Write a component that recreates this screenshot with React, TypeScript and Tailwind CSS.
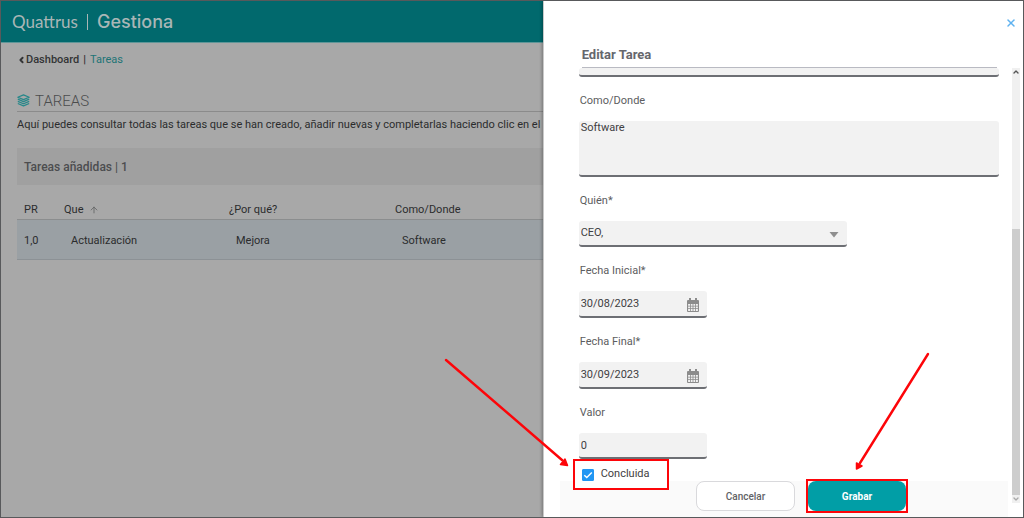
import React from "react";
import { ArrowUp, ChevronDown, ChevronLeft, ChevronUp, X } from "lucide-react";

const fieldClass =
  "block bg-[#f2f2f2] border-0 border-b-2 border-[#6d6f74] rounded-[3px] px-0.5 text-[11px] text-[#3f4042] outline-none";

const labelClass = "block pl-px pt-4 pb-3 text-[11px] leading-4 text-[#5c5d60]";

const LayersIcon = () => (
  <svg viewBox="0 0 24 24" className="w-[13px] h-[13px]" fill="none" stroke="#27888a" strokeWidth="2.3" strokeLinejoin="round">
    <path d="M12 1.5 L22.5 6 L12 10.5 L1.5 6 Z" />
    <path d="M1.500 9.500 L12 14 L22.500 9.500" />
    <path d="M1.500 13.500 L12 18 L22.500 13.500" />
    <path d="M1.500 17.500 L12 22 L22.500 17.500" />
  </svg>
);

const CalendarIcon = () => (
  <svg viewBox="0 0 12 14" className="w-3 h-3.5" fill="#8c8c8c">
    <path d="M2 0h2v2h4V0h2v2h1a1 1 0 0 1 1 1v2H0V3a1 1 0 0 1 1-1h1z" />
    <path
      fillRule="evenodd"
      d="M0 5h12v8a1 1 0 0 1-1 1H1a1 1 0 0 1-1-1zM1.100 6v1.800h1.900V6zM3.800 6v1.800h1.800V6zM6.400 6v1.800h1.800V6zM9 6v1.800h1.900V6zM1.100 8.500v1.800h1.900V8.500zM3.800 8.500v1.800h1.800V8.500zM6.400 8.500v1.800h1.800V8.500zM9 8.500v1.800h1.900V8.500zM1.100 11.100v1.800h1.900v-1.800zM3.800 11.100v1.800h1.800v-1.800zM6.400 11.100v1.800h1.800v-1.800zM9 11.100v1.800h1.900v-1.800z"
    />
  </svg>
);

type DateFieldProps = { id: string; label: string; value: string };

const DateField = ({ id, label, value }: DateFieldProps) => (
  <div>
    <label htmlFor={id} className={labelClass}>
      {label}
    </label>
    <div className="relative w-32">
      <input id={id} type="text" defaultValue={value} className={`${fieldClass} w-full h-[27px]`} />
      <button type="button" aria-label={`Abrir calendario ${label}`} className="absolute right-2 top-[7px]">
        <CalendarIcon />
      </button>
    </div>
  </div>
);

const TaskList = () => (
  <main className="flex-1 min-w-0 overflow-hidden bg-[#a8a8a8] whitespace-nowrap text-[11px] leading-4 text-[#2b2c2d]">
    <header className="flex items-center h-[42px] pl-[11px] bg-[#01696d] border-b border-[#5f9698] text-[#a9b6b6]">
      <span className="font-['Lato'] text-[17px]">Quattrus</span>
      <span className="w-px h-4 mx-[9px] bg-[#a9b6b6]" />
      <span className="font-['Inter'] text-[18px] font-medium">Gestiona</span>
    </header>
    <div className="pl-4 pt-[9px]">
      <nav className="flex items-center gap-1">
        <a href="#dashboard" className="flex items-center font-medium text-[#333435]">
          <ChevronLeft className="w-[9px] h-3" strokeWidth={5} />
          Dashboard
        </a>
        <span className="font-medium">|</span>
        <a href="#tareas" className="text-[#217476]">
          Tareas
        </a>
      </nav>
      <div className="flex items-end gap-[5px] mt-6 border-b border-[#8b8b8b]">
        <div className="pb-1">
          <LayersIcon />
        </div>
        <h1 className="text-[15px] leading-[19px] font-light text-[#4b4c4d]">TAREAS</h1>
      </div>
      <p className="mt-[5px]">
        Aquí puedes consultar todas las tareas que se han creado, añadir nuevas y completarlas haciendo clic en el
      </p>
      <h2 className="flex items-center h-[37px] mt-[15px] pl-[7px] bg-[#a0a0a0] text-[12px] font-medium text-[#4c4d4f]">
        Tareas añadidas | 1
      </h2>
      <table className="table-fixed w-full border-collapse text-left">
        <thead>
          <tr className="border-b border-[#8b8d8e]">
            <th className="w-10 pt-[17px] pb-px pl-[7px] font-normal">PR</th>
            <th className="w-[165px] pt-[17px] pb-px pl-[7px] font-normal">
              <span className="flex items-center gap-1.5">
                Que
                <ArrowUp className="w-[10px] h-[10px] text-[#626364]" />
              </span>
            </th>
            <th className="w-[166px] pt-[17px] pb-px pl-[7px] font-normal">¿Por qué?</th>
            <th className="pt-[17px] pb-px pl-[7px] font-normal">Como/Donde</th>
          </tr>
        </thead>
        <tbody>
          <tr className="h-10 bg-[#9aa0a4] border-b border-[#8c9195]">
            <td className="pt-0.5 pl-[7px]">1,0</td>
            <td className="pt-0.5 pl-3.5">Actualización</td>
            <td className="pt-0.5 pl-3.5">Mejora</td>
            <td className="pt-0.5 pl-3.5">Software</td>
          </tr>
        </tbody>
      </table>
    </div>
  </main>
);

const TaskDrawer = () => (
  <aside className="relative w-[47%] shrink-0 flex flex-col bg-white border-l border-[#c9c9c9] shadow-[-1px_0_3px_rgba(0,0,0,0.3)]">
    <header className="pl-[38px] pr-[26px] pt-4">
      <div className="flex justify-end -mr-5">
        <button type="button" aria-label="Cerrar" className="text-[#5fb2f0]">
          <X className="w-3 h-3" strokeWidth={3} />
        </button>
      </div>
      <h2 className="mt-4 pb-0.5 border-b border-[#b9bac2] text-[13px] leading-5 font-bold text-[#66676d]">
        Editar Tarea
      </h2>
    </header>
    <div className="flex-1 flex">
      <form className="flex-1 flex flex-col pl-4">
        <div className="pl-[19px] pr-[9px]">
          <textarea aria-label="Por qué" className={`${fieldClass} w-full h-[9px] resize-none overflow-hidden`} />

          <label htmlFor="como" className={labelClass}>
            Como/Donde
          </label>
          <textarea id="como" defaultValue="Software" className={`${fieldClass} w-full h-14 resize-none leading-[14px]`} />

          <label htmlFor="quien" className={labelClass}>
            Quién*
          </label>
          <div className="relative w-[268px]">
            <select id="quien" className={`${fieldClass} w-full h-[26px] appearance-none`}>
              <option>CEO,</option>
            </select>
            <svg viewBox="0 0 10 6" className="absolute right-2 top-[11px] w-[10px] h-1.5 pointer-events-none" fill="#8f8f8f">
              <path d="M0.500 0h9L5 5.500z" />
            </svg>
          </div>

          <DateField id="inicio" label="Fecha Inicial*" value="30/08/2023" />
          <DateField id="fin" label="Fecha Final*" value="30/09/2023" />

          <label htmlFor="valor" className={labelClass}>
            Valor
          </label>
          <input id="valor" type="text" defaultValue="0" className={`${fieldClass} w-32 h-[26px]`} />

          {/* highlighted step 1 */}
          <div className="relative z-10 w-24 h-[31px] -ml-1.5 bg-white border-2 border-[#fd0509]">
            <label className="flex items-center gap-[7px] h-full pl-[7px] text-[11px] text-[#3f4042]">
              <span className="relative w-3 h-3">
                <input
                  type="checkbox"
                  defaultChecked
                  className="peer block appearance-none w-3 h-3 rounded-[1px] border border-[#2196f3] checked:bg-[#2196f3]"
                />
                <svg viewBox="0 0 12 12" className="absolute inset-0 hidden peer-checked:block pointer-events-none" fill="none" stroke="#fff" strokeWidth="1.4">
                  <path d="M2.3 6.2 L4.8 8.6 L9.8 3.6" />
                </svg>
              </span>
              Concluida
            </label>
            <svg viewBox="0 0 126 110" className="absolute right-full bottom-5 mr-1.5 w-[126px] h-[110px] pointer-events-none">
              <path d="M3 2 L119 102" stroke="#fd0509" strokeWidth="2.4" strokeLinecap="round" />
              <path d="M124.500 107.500 L117.500 106.500 L122 101 Z" fill="#fd0509" stroke="#fd0509" strokeWidth="1.5" strokeLinejoin="round" />
            </svg>
          </div>
        </div>

        <footer className="flex flex-1 items-start justify-end gap-[13px] -mt-[9px] pr-[102px] bg-[#fafafa]">
          <button
            type="button"
            className="w-[99px] h-[30px] rounded-lg border border-[#d9d9dc] bg-white text-[10px] font-medium text-[#626367]"
          >
            Cancelar
          </button>
          {/* highlighted step 2 */}
          <div className="relative">
            <button type="submit" className="block w-[98px] h-[30px] rounded-lg bg-[#019ea6] text-[10px] font-bold text-white">
              Grabar
            </button>
            <span className="absolute -inset-0.5 border-2 border-[#fd0509] pointer-events-none" />
            <svg viewBox="0 0 76 120" className="absolute left-[47px] bottom-10 w-[76px] h-[120px] pointer-events-none">
              <path d="M73 3 L5 112" stroke="#fd0509" strokeWidth="2.4" strokeLinecap="round" />
              <path d="M1.500 118 L1.500 112 L7 115 Z" fill="#fd0509" stroke="#fd0509" strokeWidth="1.5" strokeLinejoin="round" />
            </svg>
          </div>
        </footer>
      </form>
      <div className="flex flex-col items-center w-2 ml-1 mr-[3px] mb-3.5 bg-[#f0f0f0]">
        <ChevronUp className="w-2 h-2 text-[#555]" strokeWidth={4} />
        <div className="w-full mt-auto h-[266px] bg-[#cdcdcd]" />
        <ChevronDown className="w-2 h-2 text-[#aaa]" strokeWidth={4} />
      </div>
    </div>
  </aside>
);

const App = () => {
  return (
    <div className="flex min-h-screen overflow-hidden border border-[#58595b] font-['Roboto',sans-serif]">
      <TaskList />
      <TaskDrawer />
    </div>
  );
};

export default App;
